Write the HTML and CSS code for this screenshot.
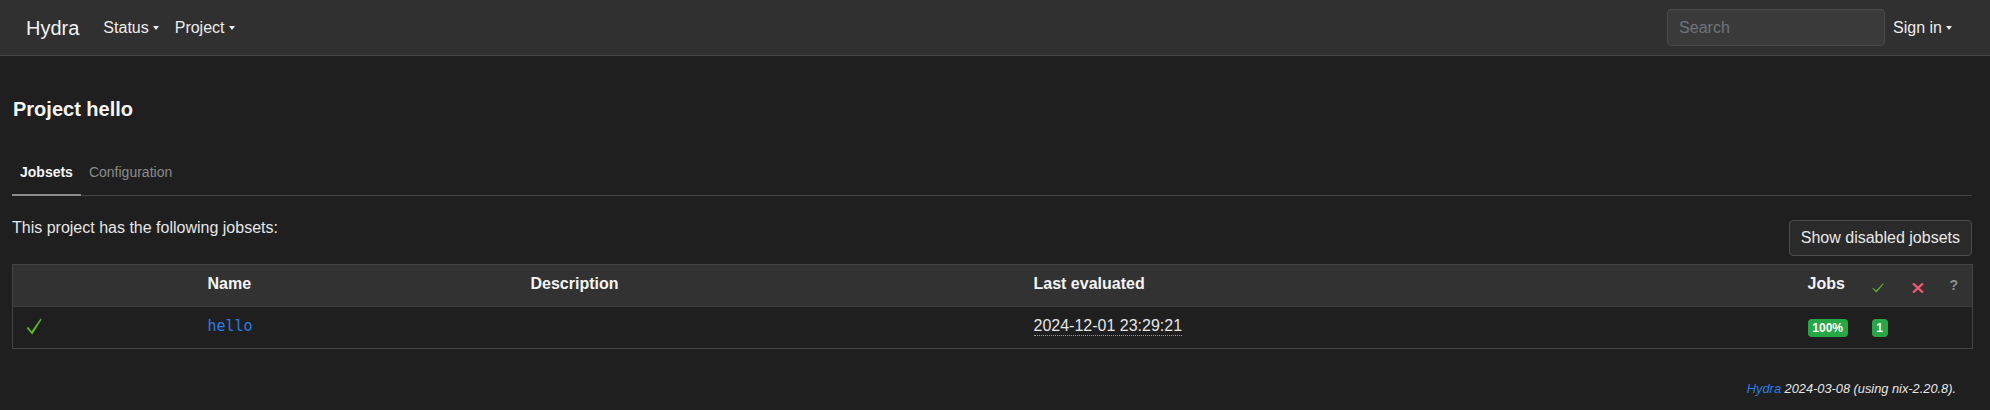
FILE: index.html
```html
<!DOCTYPE html>
<html lang="en">
<head>
<meta charset="utf-8">
<title>Hydra - Project hello</title>
<link rel="stylesheet" href="styles.css">
</head>
<body>
<nav class="navbar">
  <a class="brand" href="#">Hydra</a>
  <ul class="nav">
    <li><a class="nav-link dropdown" href="#">Status</a></li>
    <li><a class="nav-link dropdown" href="#">Project</a></li>
  </ul>
  <div class="nav-right">
    <input class="search" type="text" placeholder="Search">
    <a class="nav-link dropdown" href="#">Sign in</a>
  </div>
</nav>

<main class="container">
  <h1 class="page-title">Project hello</h1>
  <ul class="tabs">
    <li class="tab active">Jobsets</li>
    <li class="tab">Configuration</li>
  </ul>

  <div class="intro-row">
    <p class="intro">This project has the following jobsets:</p>
    <button class="btn">Show disabled jobsets</button>
  </div>

  <table class="jobsets">
    <colgroup>
      <col class="c-status"><col class="c-name"><col class="c-desc"><col class="c-last"><col class="c-jobs"><col class="c-ok"><col class="c-fail"><col class="c-unk">
    </colgroup>
    <thead>
      <tr>
        <th></th>
        <th>Name</th>
        <th>Description</th>
        <th>Last evaluated</th>
        <th>Jobs</th>
        <th><svg class="ico-check-sm" width="12" height="10" viewBox="0 0 12 10"><path d="M0.3 5.6 L1.4 4.9 L4.2 7.6 L11 0.3 L11.7 0.9 L4.4 9.6 Z" fill="#5cb82c"/></svg></th>
        <th><svg class="ico-x" width="12" height="10" viewBox="0 0 12 10"><path d="M1 0.5 L11 9.5 M11 0.5 L1 9.5" stroke="#ef5a74" stroke-width="2.3" fill="none"/></svg></th>
        <th class="unk">?</th>
      </tr>
    </thead>
    <tbody>
      <tr>
        <td><svg class="ico-check" width="16" height="17" viewBox="0 0 16 17"><path d="M0.5 10 L2.2 9 L5.6 13.2 L14.6 0.6 L15.6 1.4 L6.2 16.4 Z" fill="#5cb82c"/></svg></td>
        <td><a class="mono" href="#">hello</a></td>
        <td></td>
        <td><span class="date" title="2024-12-01 23:29:21">2024-12-01 23:29:21</span></td>
        <td><span class="badge">100%</span></td>
        <td><span class="badge">1</span></td>
        <td></td>
        <td></td>
      </tr>
    </tbody>
  </table>
</main>

<footer class="footer">
  <em><a href="#">Hydra</a> 2024-03-08 (using nix-2.20.8).</em>
</footer>
</body>
</html>
```

FILE: styles.css
```css
* { box-sizing: border-box; }
html, body { margin: 0; padding: 0; }
body {
  background: #1f1f1f;
  color: #e6e6e6;
  font-family: "Liberation Sans", Arial, sans-serif;
  font-size: 16px;
  line-height: 24px;
}
a { text-decoration: none; }

.navbar {
  height: 56px;
  background: #303030;
  border-bottom: 1px solid #454545;
  display: flex;
  align-items: center;
  padding: 0 30px 0 26px;
}
.brand {
  color: #f2f2f2;
  font-size: 20px;
  line-height: 30px;
  margin-right: 16px;
}
.nav {
  list-style: none;
  margin: 0;
  padding: 0;
  display: flex;
}
.nav-link {
  color: #ececec;
  padding: 8px 8px;
  display: inline-block;
}
.dropdown::after {
  content: "";
  display: inline-block;
  margin-left: 4px;
  vertical-align: 3px;
  border-top: 4px solid #ececec;
  border-left: 3.5px solid transparent;
  border-right: 3.5px solid transparent;
}
.nav-right {
  margin-left: auto;
  display: flex;
  align-items: center;
}
.search {
  width: 218px;
  height: 37px;
  background: #3a3a3a;
  border: 1px solid #4a4a4a;
  border-radius: 4px;
  color: #ddd;
  font-family: "Liberation Sans", Arial, sans-serif;
  font-size: 16px;
  padding: 0 11px;
}
.search::placeholder { color: #6f747a; }

.container {
  padding: 0 18px 0 12px;
}
.page-title {
  margin: 41px 0 0 1px;
  font-size: 20px;
  line-height: 24px;
  font-weight: bold;
  color: #f4f4f4;
}
.tabs {
  list-style: none;
  margin: 30px 0 0 0;
  padding: 0;
  display: flex;
  border-bottom: 1px solid #454545;
}
.tab {
  font-size: 14px;
  line-height: 21px;
  padding: 11px 8px 11px 8px;
  color: #8c8c8c;
  margin-bottom: -1px;
  border-bottom: 2px solid transparent;
}
.tab.active {
  color: #f4f4f4;
  font-weight: bold;
  border-bottom-color: #8a8a8a;
}

.intro-row {
  display: flex;
  justify-content: space-between;
  align-items: flex-start;
  padding-top: 20px;
}
.intro { margin: 0; color: #e6e6e6; }
.btn {
  margin-top: 4px;
  font-family: "Liberation Sans", Arial, sans-serif;
  font-size: 16px;
  line-height: 24px;
  color: #e8e8e8;
  background: #2a2a2a;
  border: 1px solid #4d4d4d;
  border-radius: 4px;
  padding: 5px 11px;
}

.jobsets {
  margin-top: 8px;
  width: 100%;
  border-collapse: collapse;
  table-layout: fixed;
  border: 1px solid #444;
}
.c-status { width: 183px; }
.c-name { width: 323px; }
.c-desc { width: 503px; }
.c-last { width: 774px; }
.c-jobs { width: 64px; }
.c-ok { width: 40px; }
.c-fail { width: 38px; }
.c-unk { width: 35px; }

.jobsets th, .jobsets td {
  text-align: left;
  padding: 7px 12px 9px 12px;
  vertical-align: top;
  white-space: nowrap;
}
.jobsets thead tr {
  background: #323232;
  border-bottom: 1px solid #3d3d3d;
}
.jobsets th {
  font-weight: bold;
  color: #f4f4f4;
}
.ico-check-sm { display: block; margin-top: 11px; }
.ico-x { display: block; margin-top: 11px; }
.ico-check { display: block; margin: 4px 0 0 1px; }
.jobsets th.unk {
  color: #8f8f8f;
  font-size: 14px;
  padding-top: 8px;
}
.mono {
  font-family: "DejaVu Sans Mono", monospace;
  font-size: 15px;
  color: #2a7ee6;
}
.date {
  border-bottom: 1px dotted #9a9a9a;
  padding-bottom: 1px;
}
.badge {
  display: inline-block;
  margin-top: 5px;
  background: #28a745;
  color: #fff;
  font-size: 12px;
  font-weight: bold;
  line-height: 12px;
  padding: 3px 4.8px;
  border-radius: 4px;
}

.footer {
  text-align: right;
  padding: 30px 34px 0 0;
  font-size: 12.8px;
  line-height: 19px;
  color: #e6e6e6;
}
.footer a { color: #2a7ee6; }
```
